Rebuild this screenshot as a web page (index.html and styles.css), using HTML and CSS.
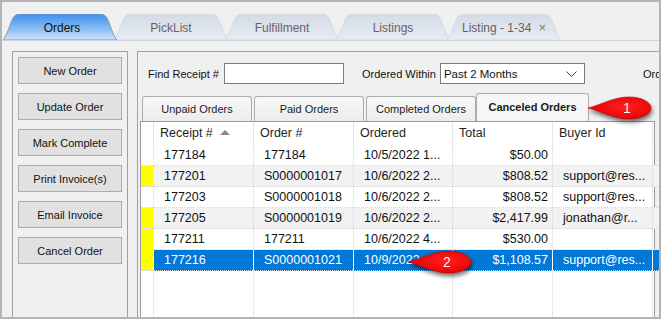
FILE: index.html
```html
<!DOCTYPE html>
<html>
<head>
    <title>Orders</title>
    <link rel="stylesheet" href="styles.css">
</head>
<body>
    <svg class="defs" width="0" height="0">
        <defs>
            <linearGradient id="tabBlue" x1="0" y1="0" x2="0" y2="1">
                <stop offset="0" stop-color="#3d90f0"/>
                <stop offset="0.55" stop-color="#86bbf4"/>
                <stop offset="1" stop-color="#d3e5fa"/>
            </linearGradient>
            <linearGradient id="tabGray" x1="0" y1="0" x2="0" y2="1">
                <stop offset="0" stop-color="#d3dbe6"/>
                <stop offset="1" stop-color="#e8ecf2"/>
            </linearGradient>
            <radialGradient id="calloutRed" cx="0.6" cy="0.45" r="0.6">
                <stop offset="0" stop-color="#ff2020"/>
                <stop offset="1" stop-color="#e60000"/>
            </radialGradient>
        </defs>
    </svg>

    <div class="window">
        <div class="app-tabs">
            <div class="app-tab active">
                <svg class="tab-shape" viewBox="0 0 114 26" preserveAspectRatio="none"><path class="shape-blue" d="M0,26 C4,22 7,10 10,4 Q12,0 17,0 L97,0 Q102,0 104,4 C107,10 110,22 114,26 Z"/></svg>
                <span>Orders</span>
            </div>
            <div class="app-tab">
                <svg class="tab-shape" viewBox="0 0 114 26" preserveAspectRatio="none"><path class="shape-gray" d="M0,26 C4,22 7,10 10,4 Q12,0 17,0 L97,0 Q102,0 104,4 C107,10 110,22 114,26 Z"/></svg>
                <span>PickList</span>
            </div>
            <div class="app-tab">
                <svg class="tab-shape" viewBox="0 0 114 26" preserveAspectRatio="none"><path class="shape-gray" d="M0,26 C4,22 7,10 10,4 Q12,0 17,0 L97,0 Q102,0 104,4 C107,10 110,22 114,26 Z"/></svg>
                <span>Fulfillment</span>
            </div>
            <div class="app-tab">
                <svg class="tab-shape" viewBox="0 0 114 26" preserveAspectRatio="none"><path class="shape-gray" d="M0,26 C4,22 7,10 10,4 Q12,0 17,0 L97,0 Q102,0 104,4 C107,10 110,22 114,26 Z"/></svg>
                <span>Listings</span>
            </div>
            <div class="app-tab">
                <svg class="tab-shape" viewBox="0 0 114 26" preserveAspectRatio="none"><path class="shape-gray" d="M0,26 C4,22 7,10 10,4 Q12,0 17,0 L97,0 Q102,0 104,4 C107,10 110,22 114,26 Z"/></svg>
                <span>Listing - 1-34</span><span class="tab-close">×</span>
            </div>
        </div>

        <div class="main">
            <div class="side-panel">
                <button class="side-btn">New Order</button>
                <button class="side-btn">Update Order</button>
                <button class="side-btn">Mark Complete</button>
                <button class="side-btn">Print Invoice(s)</button>
                <button class="side-btn">Email Invoice</button>
                <button class="side-btn">Cancel Order</button>
            </div>

            <div class="content">
                <div class="filters">
                    <label>Find Receipt #</label>
                    <div class="text-box"></div>
                    <label class="ordered-label">Ordered Within</label>
                    <div class="drop-box">
                        <span>Past 2 Months</span>
                        <svg width="11" height="6" viewBox="0 0 11 6"><path d="M0.5,0.5 L5.5,5.5 L10.5,0.5" fill="none" stroke="#444" stroke-width="1"/></svg>
                    </div>
                    <label class="status-label">Order Status</label>
                </div>

                <div class="order-tabs">
                    <div class="order-tab">Unpaid Orders</div>
                    <div class="order-tab">Paid Orders</div>
                    <div class="order-tab">Completed Orders</div>
                    <div class="order-tab active">Canceled Orders</div>
                </div>

                <div class="grid">
                    <div class="grid-row grid-head">
                        <div class="cell mark"></div>
                        <div class="cell">Receipt #<span class="sort-up"></span></div>
                        <div class="cell">Order #</div>
                        <div class="cell">Ordered</div>
                        <div class="cell">Total</div>
                        <div class="cell">Buyer Id</div>
                        <div class="cell"></div>
                    </div>
                    <div class="grid-row">
                        <div class="cell mark"></div>
                        <div class="cell">177184</div>
                        <div class="cell">177184</div>
                        <div class="cell">10/5/2022 1...</div>
                        <div class="cell num">$50.00</div>
                        <div class="cell"></div>
                        <div class="cell"></div>
                    </div>
                    <div class="grid-row alt">
                        <div class="cell mark on"></div>
                        <div class="cell">177201</div>
                        <div class="cell">S0000001017</div>
                        <div class="cell">10/6/2022 2...</div>
                        <div class="cell num">$808.52</div>
                        <div class="cell">support@res...</div>
                        <div class="cell"></div>
                    </div>
                    <div class="grid-row">
                        <div class="cell mark"></div>
                        <div class="cell">177203</div>
                        <div class="cell">S0000001018</div>
                        <div class="cell">10/6/2022 2...</div>
                        <div class="cell num">$808.52</div>
                        <div class="cell">support@res...</div>
                        <div class="cell"></div>
                    </div>
                    <div class="grid-row alt">
                        <div class="cell mark on"></div>
                        <div class="cell">177205</div>
                        <div class="cell">S0000001019</div>
                        <div class="cell">10/6/2022 2...</div>
                        <div class="cell num">$2,417.99</div>
                        <div class="cell">jonathan@r...</div>
                        <div class="cell"></div>
                    </div>
                    <div class="grid-row">
                        <div class="cell mark on"></div>
                        <div class="cell">177211</div>
                        <div class="cell">177211</div>
                        <div class="cell">10/6/2022 4...</div>
                        <div class="cell num">$530.00</div>
                        <div class="cell"></div>
                        <div class="cell"></div>
                    </div>
                    <div class="grid-row sel">
                        <div class="cell mark on"></div>
                        <div class="cell">177216</div>
                        <div class="cell">S0000001021</div>
                        <div class="cell">10/9/2022</div>
                        <div class="cell num">$1,108.57</div>
                        <div class="cell">support@res...</div>
                        <div class="cell"></div>
                    </div>
                    <div class="grid-row grid-fill">
                        <div class="cell mark"></div>
                        <div class="cell"></div>
                        <div class="cell"></div>
                        <div class="cell"></div>
                        <div class="cell"></div>
                        <div class="cell"></div>
                        <div class="cell"></div>
                    </div>
                </div>
            </div>
        </div>
    </div>

    <div class="callout callout-1">
        <svg viewBox="0 0 68 26" width="68" height="26"><path d="M1,13 C14,10 26,2 42,2 A22,11 0 0 1 42,24 C26,24 14,16 1,13 Z" fill="url(#calloutRed)" stroke="#c80000" stroke-width="0.6"/></svg>
        <span>1</span>
    </div>
    <div class="callout callout-2">
        <svg viewBox="0 0 68 26" width="68" height="26"><path d="M1,13 C14,10 26,2 42,2 A22,11 0 0 1 42,24 C26,24 14,16 1,13 Z" fill="url(#calloutRed)" stroke="#c80000" stroke-width="0.6"/></svg>
        <span>2</span>
    </div>
</body>
</html>
```

FILE: styles.css
```css
body {
    margin: 0;
    height: 319px;
    overflow: hidden;
    background: #b4b4b4;
    font-family: "Liberation Sans", Arial, sans-serif;
    color: #111;
}
.defs { position: absolute; }

.window {
    margin: 2px 2px 0 2px;
    height: 315px;
    background: #f0f0f0;
    display: flex;
    flex-direction: column;
    overflow: hidden;
}

/* top application tabs */
.app-tabs {
    display: flex;
    height: 26px;
    padding: 12px 0 0 1px;
    border-bottom: 1px solid #c9d4e1;
}
.app-tab {
    position: relative;
    z-index: 0;
    width: 114px;
    height: 26px;
    margin-right: -3px;
    display: flex;
    align-items: center;
    justify-content: center;
    gap: 7px;
    padding-top: 1px;
    box-sizing: border-box;
    font-size: 12px;
    color: #6b5e66;
}
.app-tab.active { z-index: 1; color: #111; padding-left: 4px; }
.tab-shape {
    position: absolute;
    left: 0;
    top: 0;
    width: 100%;
    height: 100%;
    z-index: -1;
}
.shape-blue { fill: url(#tabBlue); stroke: #7f97b3; stroke-width: 1; }
.shape-gray { fill: url(#tabGray); stroke: #d3dbe5; stroke-width: 1; }
.tab-close { color: #7a7a7a; font-size: 13px; }

/* body */
.main {
    flex: 1;
    min-height: 0;
    display: flex;
    gap: 9px;
    padding: 10px 0 0 10px;
}
.side-panel {
    width: 116px;
    flex-shrink: 0;
    box-sizing: border-box;
    border: 1px solid #a0a0a0;
    border-bottom: none;
    padding: 5px 0 0 5px;
    display: flex;
    flex-direction: column;
    gap: 9px;
}
.side-btn {
    width: 104px;
    height: 27px;
    padding: 0;
    background: #e1e1e1;
    border: 1px solid #adadad;
    font-family: "Liberation Sans", Arial, sans-serif;
    font-size: 11px;
    color: #111;
}

.content {
    flex: 1;
    min-width: 0;
    border: 1px solid #a0a0a0;
    border-right: none;
    border-bottom: none;
    display: flex;
    flex-direction: column;
    overflow: hidden;
}

.filters {
    display: flex;
    align-items: center;
    height: 21px;
    margin: 11px 0 0 10px;
    font-size: 11px;
    white-space: nowrap;
}
.filters > * { flex-shrink: 0; }
.text-box {
    width: 120px;
    height: 21px;
    box-sizing: border-box;
    margin-left: 5px;
    border: 1px solid #7a7a7a;
    background: #fff;
}
.ordered-label { margin-left: 18px; }
.drop-box {
    width: 145px;
    height: 21px;
    box-sizing: border-box;
    margin-left: 4px;
    padding: 0 7px 0 3px;
    border: 1px solid #7a7a7a;
    background: #fff;
    display: flex;
    align-items: center;
    justify-content: space-between;
    font-size: 11.5px;
}
.status-label { margin-left: 58px; }

/* order status tabs */
.order-tabs {
    display: flex;
    align-items: flex-end;
    gap: 2px;
    height: 28px;
    margin: 9px 0 0 4px;
}
.order-tab {
    width: 110px;
    height: 25px;
    flex-shrink: 0;
    box-sizing: border-box;
    border: 1px solid #acacac;
    border-bottom: none;
    border-radius: 3px 3px 0 0;
    background: linear-gradient(#f8f8f8, #ececec);
    display: flex;
    align-items: center;
    justify-content: center;
    font-size: 11px;
    color: #1a1a1a;
}
.order-tab.active {
    width: 113px;
    height: 28px;
    margin-left: -2px;
    background: #f6f6f6;
    font-weight: bold;
    padding-bottom: 2px;
}

/* data grid */
.grid {
    flex: 1;
    margin: 0 4px 0 2px;
    border: 1px solid #9c9c9c;
    border-bottom: none;
    background: #fff;
    display: flex;
    flex-direction: column;
}
.grid-row {
    display: grid;
    grid-template-columns: 12px 100px 100px 99px 100px 100px 1fr;
    height: 21px;
}
.cell {
    border-left: 1px dotted #d6d6d6;
    border-bottom: 1px dotted #d6d6d6;
    padding-left: 10px;
    font-size: 12.5px;
    line-height: 20px;
    white-space: nowrap;
    overflow: hidden;
}
.cell.mark { border-left: none; padding: 0; }
.cell.mark.on { background: #ffff00; }
.cell.num { text-align: right; padding: 0 4px 0 0; }

.grid-head { height: 23px; }
.grid-head .cell {
    border-left: 1px solid #e6e6e6;
    border-bottom: none;
    padding-left: 6px;
    line-height: 23px;
    color: #1e1e1e;
}
.grid-head .cell.mark { border-left: none; }
.sort-up {
    display: inline-block;
    margin: 0 0 2px 7px;
    border-left: 5px solid transparent;
    border-right: 5px solid transparent;
    border-bottom: 5px solid #8a8a8a;
    vertical-align: middle;
}

.grid-row.alt .cell:not(.mark) { background: #f2f2f2; }
.grid-row.sel .cell:not(.mark) {
    background: #0078d7;
    color: #fff;
    border-left: 1px solid #fff;
}
.grid-fill { flex: 1; height: auto; }
.grid-fill .cell { border-bottom: none; }

/* numbered red callouts */
.callout {
    position: absolute;
    width: 68px;
    height: 26px;
    filter: drop-shadow(1px 3px 2px rgba(0, 0, 0, 0.55));
}
.callout svg { display: block; }
.callout span {
    position: absolute;
    left: 29px;
    top: 0;
    width: 22px;
    line-height: 26px;
    text-align: center;
    color: #fff;
    font-size: 14px;
}
.callout-1 { left: 587px; top: 95px; }
.callout-2 { left: 407px; top: 249px; }
```
